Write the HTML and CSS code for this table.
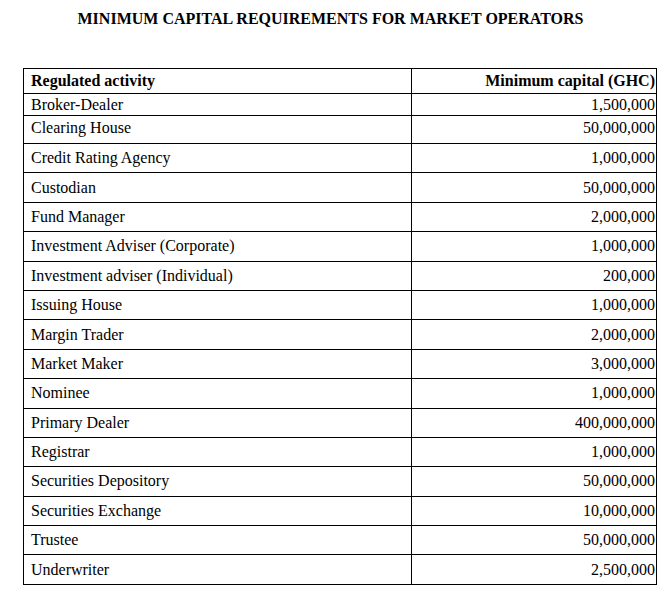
FILE: index.html
```html
<!DOCTYPE html>
<html>
<head>
<meta charset="utf-8">
<link rel="stylesheet" href="styles.css">
</head>
<body>
<div class="page">
  <h1 class="title">MINIMUM CAPITAL REQUIREMENTS FOR MARKET OPERATORS</h1>
  <table class="caps">
    <thead>
      <tr class="head-row">
        <th class="col-act">Regulated activity</th>
        <th class="col-amt">Minimum capital (GHC)</th>
      </tr>
    </thead>
    <tbody>
      <tr class="row-short"><td class="col-act">Broker-Dealer</td><td class="col-amt">1,500,000</td></tr>
      <tr class="row-mid"><td class="col-act">Clearing House</td><td class="col-amt">50,000,000</td></tr>
      <tr class="row"><td class="col-act">Credit Rating Agency</td><td class="col-amt">1,000,000</td></tr>
      <tr class="row"><td class="col-act">Custodian</td><td class="col-amt">50,000,000</td></tr>
      <tr class="row"><td class="col-act">Fund Manager</td><td class="col-amt">2,000,000</td></tr>
      <tr class="row"><td class="col-act">Investment Adviser (Corporate)</td><td class="col-amt">1,000,000</td></tr>
      <tr class="row"><td class="col-act">Investment adviser (Individual)</td><td class="col-amt">200,000</td></tr>
      <tr class="row"><td class="col-act">Issuing House</td><td class="col-amt">1,000,000</td></tr>
      <tr class="row"><td class="col-act">Margin Trader</td><td class="col-amt">2,000,000</td></tr>
      <tr class="row"><td class="col-act">Market Maker</td><td class="col-amt">3,000,000</td></tr>
      <tr class="row"><td class="col-act">Nominee</td><td class="col-amt">1,000,000</td></tr>
      <tr class="row"><td class="col-act">Primary Dealer</td><td class="col-amt">400,000,000</td></tr>
      <tr class="row"><td class="col-act">Registrar</td><td class="col-amt">1,000,000</td></tr>
      <tr class="row"><td class="col-act">Securities Depository</td><td class="col-amt">50,000,000</td></tr>
      <tr class="row"><td class="col-act">Securities Exchange</td><td class="col-amt">10,000,000</td></tr>
      <tr class="row"><td class="col-act">Trustee</td><td class="col-amt">50,000,000</td></tr>
      <tr class="row"><td class="col-act">Underwriter</td><td class="col-amt">2,500,000</td></tr>
    </tbody>
  </table>
</div>
</body>
</html>
```

FILE: styles.css
```css
html, body {
  margin: 0;
  padding: 0;
  background: #ffffff;
}

.page {
  width: 671px;
  padding-top: 9px;
  font-family: "Liberation Serif", "Times New Roman", serif;
  color: #000000;
}

.title {
  margin: 0;
  width: 661px;
  text-align: center;
  font-size: 16px;
  line-height: 20px;
  font-weight: bold;
  height: 59px;
}

.caps {
  margin-left: 23px;
  width: 634px;
  border-collapse: collapse;
  font-size: 16px;
}

.caps th,
.caps td {
  border: 1px solid #000000;
  padding: 0;
  line-height: 18px;
}

.col-act {
  width: 380px;
  text-align: left;
  padding-left: 7px !important;
}

.col-amt {
  text-align: right;
  padding-right: 1px !important;
}

.caps th {
  font-weight: bold;
}

.head-row {
  height: 25px;
}

.row-short {
  height: 22px;
}

.row-mid {
  height: 28px;
}

.row-mid td {
  vertical-align: top;
  padding-top: 3px;
}

.row {
  height: 29.4px;
}
```
